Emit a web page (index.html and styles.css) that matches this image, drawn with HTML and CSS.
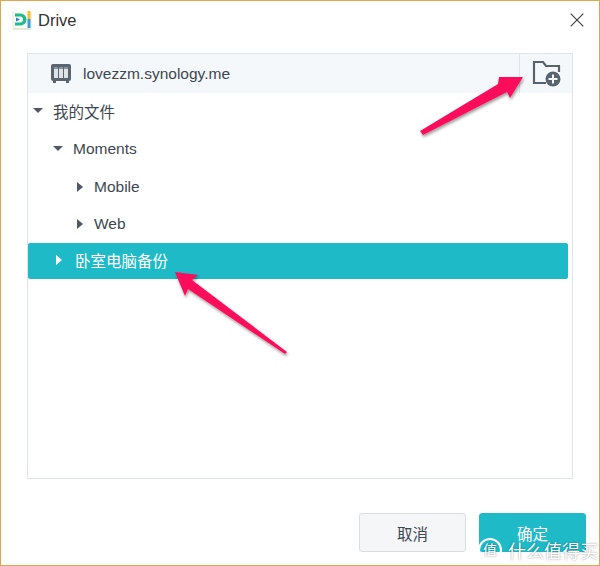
FILE: index.html
```html
<!DOCTYPE html>
<html lang="en">
<head>
    <meta charset="UTF-8">
    <meta name="viewport" content="width=device-width, initial-scale=1.0">
    <title>Drive</title>
    <link rel="stylesheet" href="styles.css">
</head>
<body>
    <div class="dialog">
        <!-- Title bar -->
        <div class="titlebar">
            <svg class="app-icon" width="20" height="21" viewBox="0 0 20 21">
                <rect x="0.5" y="1" width="19" height="19" rx="1.5" fill="#e9e6da"/>
                <rect x="1.5" y="1" width="17" height="17" fill="#fbfaf4"/>
                <rect x="15.5" y="1" width="3" height="8" fill="#f2c230"/>
                <rect x="15.5" y="9" width="3" height="9" fill="#3aa0d8"/>
                <path d="M3 3.5h5.5a6 6 0 0 1 0 12H3v-3h5a3 3 0 0 0 0-6H3z" fill="#1dbb8e"/>
                <path d="M4 7.5l4 2-4 2z" fill="#2f7fd0"/>
            </svg>
            <span class="title">Drive</span>
            <svg class="close" width="14" height="14" viewBox="0 0 14 14">
                <path d="M.7.7l12.6 12.6M13.3.7L.7 13.3" stroke="#3b3b3b" stroke-width="1.1" fill="none"/>
            </svg>
        </div>

        <!-- File tree -->
        <div class="panel">
            <div class="panel-head">
                <div class="host">
                    <svg width="20" height="19" viewBox="0 0 20 19">
                        <rect x="0" y="0" width="20" height="17" rx="2" fill="#5b6570"/>
                        <rect x="2" y="17" width="3" height="2" fill="#5b6570"/>
                        <rect x="15" y="17" width="3" height="2" fill="#5b6570"/>
                        <rect x="3" y="3" width="4" height="11" fill="#dfe3e7"/>
                        <rect x="8" y="3" width="4" height="11" fill="#dfe3e7"/>
                        <rect x="13" y="3" width="4" height="11" fill="#dfe3e7"/>
                        <rect x="3" y="3" width="4" height="2" fill="#8a939b"/>
                        <rect x="8" y="3" width="4" height="2" fill="#8a939b"/>
                        <rect x="13" y="3" width="4" height="2" fill="#8a939b"/>
                    </svg>
                    <span>lovezzm.synology.me</span>
                </div>
                <div class="new-folder">
                    <svg width="30" height="27" viewBox="0 0 30 27">
                        <path d="M14 23H2V2h9l3 4h13v6" fill="none" stroke="#59636d" stroke-width="2.2"/>
                        <circle cx="21" cy="19" r="7.5" fill="#59636d"/>
                        <path d="M21 14.5v9M16.5 19h9" stroke="#f5f8fb" stroke-width="2"/>
                    </svg>
                </div>
            </div>
            <ul class="tree">
                <li class="row first"><span class="caret-down"></span>我的文件</li>
                <li class="row level-1"><span class="caret-down"></span>Moments</li>
                <li class="row level-2"><span class="caret-right"></span>Mobile</li>
                <li class="row level-2"><span class="caret-right"></span>Web</li>
                <li class="row level-1 selected"><span class="caret-right"></span>卧室电脑备份</li>
            </ul>
        </div>

        <!-- Buttons -->
        <div class="actions">
            <button class="btn">取消</button>
            <button class="btn primary">确定</button>
        </div>
    </div>

    <!-- Annotation arrows drawn over the screenshot -->
    <svg class="arrows" width="600" height="566" viewBox="0 0 600 566">
        <defs>
            <filter id="shadow" x="-20%" y="-20%" width="140%" height="140%">
                <feDropShadow dx="1" dy="2" stdDeviation="1.5" flood-color="#000" flood-opacity="0.4"/>
            </filter>
        </defs>
        <path filter="url(#shadow)" fill="#fb0f5b" d="M523 77L510 98 507 92 423 135 420 131 498 84 499 77z"/>
        <path filter="url(#shadow)" fill="#fb0f5b" d="M175 272L198 275 192 280 287 352 285 354 188 289 185 296z"/>
    </svg>

    <!-- Watermark -->
    <div class="watermark">
        <span class="mark">值</span>
        <span>什么值得买</span>
    </div>
</body>
</html>
```

FILE: styles.css
```css
html, body {
    margin: 0;
    padding: 0;
}
body {
    width: 600px;
    height: 566px;
    overflow: hidden;
    position: relative;
    font-family: "Liberation Sans", "Noto Sans CJK SC", sans-serif;
    color: #3d4750;
}
.dialog {
    width: 600px;
    height: 566px;
    box-sizing: border-box;
    background-color: #ffffff;
    border: 1px solid #e2a64e;
    display: flex;
    flex-direction: column;
}
.titlebar {
    height: 38px;
    display: flex;
    align-items: center;
    padding: 0 15px 0 11px;
    flex-shrink: 0;
}
.app-icon {
    margin-right: 6px;
}
.title {
    font-size: 16.5px;
    color: #333333;
    flex: 1;
}
.panel {
    margin: 14px 26px 0;
    height: 426px;
    box-sizing: border-box;
    border: 1px solid #dde4ec;
}
.panel-head {
    height: 39px;
    display: flex;
    background-color: #f5f8fb;
}
.host {
    flex: 1;
    display: flex;
    align-items: center;
    gap: 12px;
    padding-left: 23px;
    font-size: 15.5px;
}
.new-folder {
    width: 53px;
    border-left: 1px solid #dde4ec;
    display: flex;
    align-items: center;
    justify-content: center;
    padding-left: 2px;
    box-sizing: border-box;
}
.tree {
    list-style: none;
    margin: 0;
    padding: 0;
}
.row {
    height: 37px;
    display: flex;
    align-items: center;
    font-size: 15.5px;
    padding-left: 5px;
}
.first {
    margin-top: -1px;
    margin-bottom: 1px;
}
.level-1 {
    padding-left: 25px;
}
.level-2 {
    padding-left: 49px;
    position: relative;
    top: 1px;
}
.caret-down {
    width: 0;
    height: 0;
    border-left: 5px solid transparent;
    border-right: 5px solid transparent;
    border-top: 5px solid #4f5963;
    margin-right: 10px;
}
.caret-right {
    width: 0;
    height: 0;
    border-top: 5px solid transparent;
    border-bottom: 5px solid transparent;
    border-left: 6px solid #4f5963;
    margin-right: 11px;
}
.selected {
    height: 36px;
    box-sizing: border-box;
    background-color: #1fbac8;
    color: #ffffff;
    border-radius: 2px;
    margin: 2px 4px 0 0;
    padding: 0 0 2px 28px;
}
.selected .caret-right {
    border-left-color: #ffffff;
    margin-right: 13px;
}
.actions {
    display: flex;
    justify-content: flex-end;
    gap: 13px;
    margin-top: 34px;
    padding-right: 13px;
}
.btn {
    width: 107px;
    height: 39px;
    font-family: inherit;
    font-size: 15.5px;
    color: #3d4750;
    background-color: #f5f6f8;
    border: 1px solid #d9dde2;
    border-radius: 3px;
    padding: 0;
}
.primary {
    background-color: #1fbac8;
    border-color: #1fbac8;
    color: #ffffff;
}
.arrows {
    position: absolute;
    left: 0;
    top: 0;
}
.watermark {
    position: absolute;
    left: 478px;
    top: 537px;
    display: flex;
    align-items: center;
    gap: 6px;
    font-size: 18px;
    color: #ffffff;
    text-shadow: 0 0 2px rgba(0, 0, 0, 0.45);
    white-space: nowrap;
}
.mark {
    width: 20px;
    height: 20px;
    border: 2px solid #ffffff;
    border-radius: 50%;
    font-size: 14px;
    line-height: 20px;
    text-align: center;
}
```
